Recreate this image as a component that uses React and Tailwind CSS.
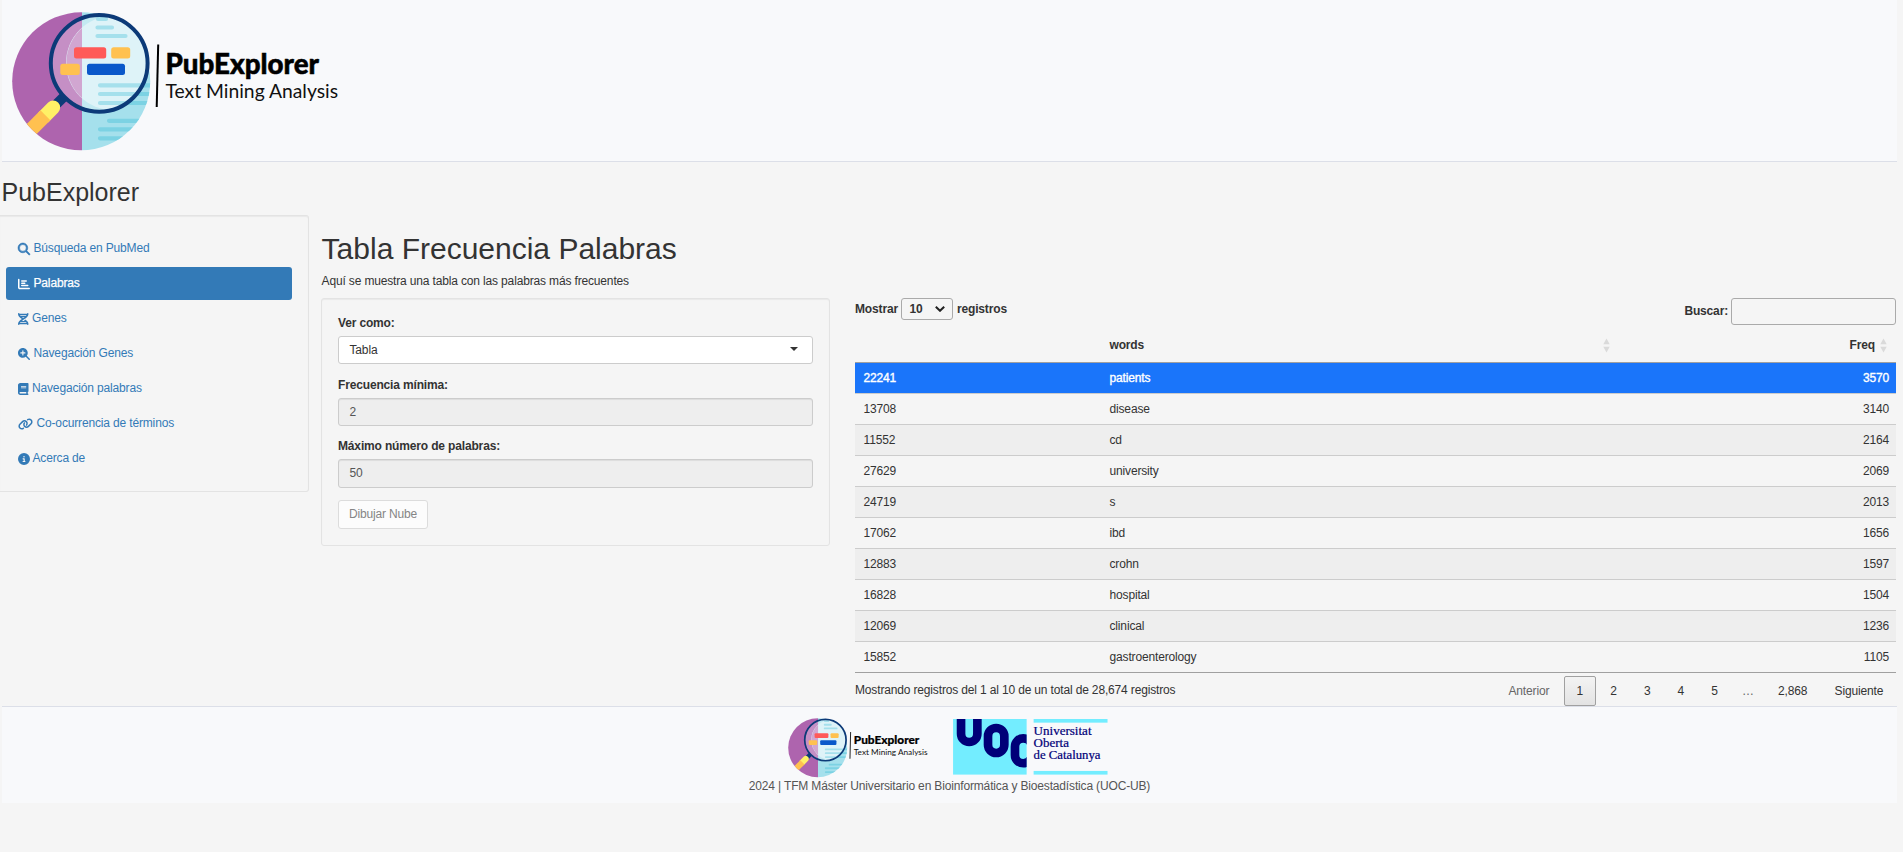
import React from "react";
import {
  FaMagnifyingGlass,
  FaChartBar,
  FaDna,
  FaMagnifyingGlassPlus,
  FaBook,
  FaLink,
  FaCircleInfo,
} from "react-icons/fa6";

const navItems = [
  { icon: FaMagnifyingGlass, label: "Búsqueda en PubMed", size: "h-3 w-3 overflow-visible stroke-[24px]" },
  { icon: FaChartBar, label: "Palabras", size: "h-3 w-3", active: true },
  { icon: FaDna, label: "Genes", size: "h-3 w-[10.5px]" },
  { icon: FaMagnifyingGlassPlus, label: "Navegación Genes", size: "h-3 w-3" },
  { icon: FaBook, label: "Navegación palabras", size: "h-3 w-[10.5px]" },
  { icon: FaLink, label: "Co-ocurrencia de términos", size: "h-3 w-[15px]" },
  { icon: FaCircleInfo, label: "Acerca de", size: "h-3 w-3 -mr-px" },
];

const rows = [
  [22241, "patients", 3570],
  [13708, "disease", 3140],
  [11552, "cd", 2164],
  [27629, "university", 2069],
  [24719, "s", 2013],
  [17062, "ibd", 1656],
  [12883, "crohn", 1597],
  [16828, "hospital", 1504],
  [12069, "clinical", 1236],
  [15852, "gastroenterology", 1105],
];

function Logo({ id, className }) {
  const disc = id + "-disc";
  const lens = id + "-lens";
  return (
    <svg viewBox="0 0 350 160" className={className}>
      <defs>
        <clipPath id={disc}>
          <circle cx="81.2" cy="81.3" r="69" />
        </clipPath>
        <clipPath id={lens}>
          <circle cx="99.2" cy="63.3" r="48" />
        </clipPath>
      </defs>
      <g clipPath={`url(#${disc})`}>
        <rect x="10" y="10" width="72" height="142" fill="#ae64ae" />
        <rect x="82" y="10" width="72" height="142" fill="#a5e0ec" />
        <g stroke="#7cd2e3" strokeWidth="4.2" strokeLinecap="round">
          <path d="M100 85.3H152M100 94H152M100 103H152M109 120.8H152M100 129.3H152M100 138.3H152" />
        </g>
        <g transform="rotate(45 62 98)">
          <rect x="57.5" y="93" width="10" height="17" fill="#0c3a78" />
          <path d="M55.5 111a7 7 0 0 1 14 0V125h-14z" fill="#fff066" />
          <rect x="55.5" y="122" width="14" height="32" fill="#ffc150" />
        </g>
      </g>
      <g clipPath={`url(#${lens})`}>
        <rect x="48" y="12" width="34" height="104" fill="#c58fc5" />
        <rect x="82" y="12" width="70" height="104" fill="#c3eaf2" />
        <circle cx="113" cy="63" r="47" fill="#def3f8" />
        <path d="M82 28A47 47 0 0 0 82 98Z" fill="#d1a6d1" />
        <g stroke="#a5e0ec" strokeWidth="4.2" strokeLinecap="round">
          <path d="M98 19H106M97.5 27.5H112M97.5 36H125.5M100 85.3H145M100 94H142M100 103H136" />
        </g>
      </g>
      <circle cx="99.2" cy="63.3" r="48.4" fill="none" stroke="#0c3a78" strokeWidth="4" />
      <rect x="74" y="47.3" width="32.2" height="11.2" rx="2.5" fill="#ff5a58" />
      <rect x="111.2" y="47.3" width="19" height="11.2" rx="2.5" fill="#ffc150" />
      <rect x="60.3" y="63.7" width="19.5" height="11.3" rx="2.5" fill="#ffc150" />
      <rect x="87" y="63.7" width="38" height="11.3" rx="2.5" fill="#0a58ca" />
      <path d="M158.2 44.5L156.7 107" stroke="#000" strokeWidth="2" />
      <text
        x="165.5"
        y="73.5"
        fontFamily="Lato, sans-serif"
        fontWeight="900"
        fontSize="28"
        textLength="153.5"
        lengthAdjust="spacingAndGlyphs"
        fill="#000"
        stroke="#000"
        strokeWidth="0.5"
      >
        PubExplorer
      </text>
      <text
        x="165.5"
        y="98"
        fontFamily="Lato, sans-serif"
        fontSize="19"
        textLength="172.5"
        lengthAdjust="spacingAndGlyphs"
        fill="#111"
      >
        Text Mining Analysis
      </text>
    </svg>
  );
}

function UocLogo() {
  return (
    <svg viewBox="0 0 464 167" className="h-[55.6px] w-[154.6px]">
      <defs>
        <clipPath id="uoc-box">
          <rect width="221" height="167" />
        </clipPath>
      </defs>
      <rect width="221" height="167" fill="#73edff" />
      <g clipPath="url(#uoc-box)" fill="none" stroke="#000078" strokeWidth="26">
        <path d="M24 -5V44a24.5 25 0 0 0 49 0V-5" />
        <rect x="105" y="27" width="49" height="75" rx="24.5" />
        <path d="M236 83a25 25 0 0 0 -50 0V108a25 25 0 0 0 50 0" />
      </g>
      <rect x="242" width="222" height="11" fill="#73edff" />
      <rect x="242" y="156" width="222" height="11" fill="#73edff" />
      <g
        fill="#000078"
        stroke="#000078"
        strokeWidth="0.6"
        fontFamily="'Liberation Serif', serif"
        fontSize="35"
      >
        <text x="242" y="47" textLength="174" lengthAdjust="spacingAndGlyphs">Universitat</text>
        <text x="242" y="83" textLength="106" lengthAdjust="spacingAndGlyphs">Oberta</text>
        <text x="242" y="119" textLength="201" lengthAdjust="spacingAndGlyphs">de Catalunya</text>
      </g>
    </svg>
  );
}

function SortArrows() {
  return (
    <svg viewBox="0 0 7 15" className="h-[15px] w-[7px] shrink-0" fill="#dadada">
      <path d="M0.3 6.3L3.5 0.5L6.7 6.3Z M0.3 8.7L3.5 14.5L6.7 8.7Z" />
    </svg>
  );
}

function Sidebar() {
  return (
    <aside className="h-[277px] w-[309px] shrink-0 rounded-r-[3px] border border-l-0 border-[#e3e3e3] pt-[16px] pr-4 pl-[6px] shadow-[inset_0_1px_1px_rgba(0,0,0,0.05)]">
      <nav className="flex flex-col gap-[2px]">
        {navItems.map(({ icon: Icon, label, size, active }) => (
          <a
            key={label}
            className={
              active
                ? "flex h-[33px] items-center gap-[3.5px] rounded-[3px] bg-[#337ab7] px-3 text-white [-webkit-text-stroke:0.25px_white]"
                : "flex h-[33px] items-center gap-[3.5px] rounded-[3px] px-3 text-[#337ab7]"
            }
          >
            <Icon className={size} />
            <span>{label}</span>
          </a>
        ))}
      </nav>
    </aside>
  );
}

function Controls() {
  return (
    <section className="h-[248px] w-[509px] shrink-0 rounded-[3px] border border-[#e3e3e3] px-4 pt-[15px] shadow-[inset_0_1px_1px_rgba(0,0,0,0.05)]">
      <label className="block pt-px leading-[16px] font-bold">Ver como:</label>
      <div className="mt-[5px] flex h-7 items-center justify-between rounded-[3px] border border-[#ccc] bg-white pr-[14px] pl-[10.5px]">
        <span>Tabla</span>
        <svg viewBox="0 0 8 4" className="mb-[3px] h-1 w-2" fill="#333">
          <path d="M0 0H8L4 4Z" />
        </svg>
      </div>
      <label className="mt-3 block pt-px leading-[16px] font-bold">Frecuencia mínima:</label>
      <div className="mt-[5px] flex h-7 items-center rounded-[3px] border border-[#ccc] bg-[#eee] px-[10.5px] text-[#555] shadow-[inset_0_1px_1px_rgba(0,0,0,0.075)]">
        2
      </div>
      <label className="mt-3 block font-bold">Máximo número de palabras:</label>
      <div className="mt-1 flex h-[29px] items-center rounded-[3px] border border-[#ccc] bg-[#eee] px-[10.5px] text-[#555] shadow-[inset_0_1px_1px_rgba(0,0,0,0.075)]">
        50
      </div>
      <button className="mt-3 block h-[29px] w-[90px] rounded-[3px] border border-[#dcdcdc] bg-[#fcfcfc] text-center whitespace-nowrap text-[#858585]">
        Dibujar Nube
      </button>
    </section>
  );
}

function FrequencyTable() {
  return (
    <section className="ml-[25px] w-[1041px] shrink-0">
      <div className="flex h-[31px] items-start justify-between font-bold">
        <div className="flex items-center gap-[3.5px]">
          <span>Mostrar</span>
          <span className="flex h-[22px] w-[52px] items-center justify-between rounded-[3px] border border-[#aaa] pr-[7px] pl-[7px]">
            10
            <svg viewBox="0 0 10 6" className="h-[6px] w-[10px]" fill="none" stroke="#222" strokeWidth="2">
              <path d="M0.8 0.8L5 4.8L9.2 0.8" />
            </svg>
          </span>
          <span>registros</span>
        </div>
        <div className="flex items-center gap-[3px]">
          <span className="pb-px leading-[17px]">Buscar:</span>
          <span className="h-[27px] w-[165px] rounded-[3px] border border-[#aaa]" />
        </div>
      </div>
      <div className="flex h-[34px] items-center border-b border-[#a0a0a0] pl-[254.5px] font-bold">
        <span className="w-[493.5px]">words</span>
        <SortArrows />
        <span className="ml-auto pr-[5px]">Freq</span>
        <span className="pr-[9px]">
          <SortArrows />
        </span>
      </div>
      <div className="border-b border-[#a0a0a0]">
        {rows.map(([id, word, freq], i) => (
          <div
            key={id}
            className={
              i === 0
                ? "flex h-[30px] items-center bg-[#1a75fa] pr-[7px] pl-[8.5px] text-white [-webkit-text-stroke:0.35px_white]"
                : i % 2 === 0
                ? "flex h-[31px] items-center border-t border-[#ccc] bg-[#eee] pr-[7px] pl-[8.5px]"
                : "flex h-[31px] items-center border-t border-[#ccc] pr-[7px] pl-[8.5px]"
            }
          >
            <span className="w-[246px]">{id}</span>
            <span>{word}</span>
            <span className="ml-auto">{freq}</span>
          </div>
        ))}
      </div>
      <div className="flex justify-between">
        <span className="pt-[9px]">Mostrando registros del 1 al 10 de un total de 28,674 registros</span>
        <div className="flex gap-[1.6px] pt-[3px] leading-[28px]">
          <span className="border border-transparent px-[11.8px] text-[#666]">Anterior</span>
          <span className="rounded-[2px] border border-[#a0a0a0] bg-linear-to-b from-[#f3f3f3] to-[#e3e3e3] px-[11.8px]">1</span>
          <span className="border border-transparent px-[11.8px]">2</span>
          <span className="border border-transparent px-[11.8px]">3</span>
          <span className="border border-transparent px-[11.8px]">4</span>
          <span className="border border-transparent px-[11.8px]">5</span>
          <span className="px-[9.8px] pt-px text-[#666]">…</span>
          <span className="border border-transparent px-[11.8px]">2,868</span>
          <span className="border border-transparent px-[11.8px]">Siguiente</span>
        </div>
      </div>
    </section>
  );
}

export default function App() {
  return (
    <div className="h-[852px] w-full overflow-hidden bg-[#f5f5f5] font-['Liberation_Sans',Arial,sans-serif] text-[12px] leading-[17px] tracking-[-0.155px] text-[#333]">
      <header className="ml-[2px] h-[162px] w-[1895px] border-b border-[#dcdfe8] bg-[#f8f9fb]">
        <Logo id="head" className="-ml-[2px] h-[160px] w-[350px] tracking-normal" />
      </header>
      <h2 className="h-[53px] pt-4 pl-[1.5px] text-[25px] leading-[28px] tracking-normal">PubExplorer</h2>
      <div className="flex h-[491px] items-start">
        <Sidebar />
        <main className="ml-3 flex flex-col">
          <h1 className="h-[57px] pt-[17px] pl-[0.6px] text-[30px] leading-[34px] tracking-normal">Tabla Frecuencia Palabras</h1>
          <p className="h-[26px] pt-px pl-[0.6px]">Aquí se muestra una tabla con las palabras más frecuentes</p>
          <div className="flex items-start">
            <Controls />
            <FrequencyTable />
          </div>
        </main>
      </div>
      <footer className="ml-[2px] flex h-[97px] w-[1895px] flex-col items-center border-t border-[#dcdfe8] bg-[#f8f9fb] pt-[6px] text-[#555]">
        <div className="flex h-[64px] items-start gap-5 pr-2 tracking-normal">
          <Logo id="foot" className="h-[68.4px] w-[149.6px]" />
          <div className="pt-[6px]">
            <UocLogo />
          </div>
        </div>
        <p className="pt-px">2024 | TFM Máster Universitario en Bioinformática y Bioestadística (UOC-UB)</p>
      </footer>
    </div>
  );
}
